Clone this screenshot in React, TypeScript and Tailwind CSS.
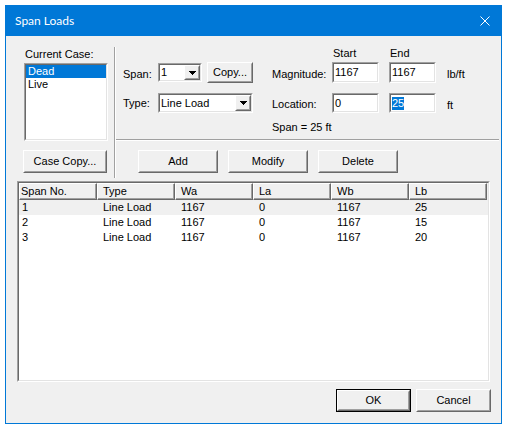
import React from "react";

const F = "font-['Liberation_Sans',Arial,sans-serif]";

function Sunken({
  className = "",
  innerClassName = "",
  children,
}: {
  className?: string;
  innerClassName?: string;
  children?: React.ReactNode;
}) {
  return (
    <div
      className={`border border-t-[#a0a0a0] border-l-[#a0a0a0] border-r-white border-b-white ${className}`}
    >
      <div
        className={`h-full w-full border border-t-[#696969] border-l-[#696969] border-r-[#e3e3e3] border-b-[#e3e3e3] ${innerClassName}`}
      >
        {children}
      </div>
    </div>
  );
}

function Raised({
  className = "",
  innerClassName = "",
  children,
}: {
  className?: string;
  innerClassName?: string;
  children?: React.ReactNode;
}) {
  return (
    <div
      className={`border border-t-white border-l-white border-r-[#696969] border-b-[#696969] ${className}`}
    >
      <div
        className={`h-full w-full border border-t-[#f0f0f0] border-l-[#f0f0f0] border-r-[#a0a0a0] border-b-[#a0a0a0] bg-[#f0f0f0] ${innerClassName}`}
      >
        {children}
      </div>
    </div>
  );
}

function Btn({
  className = "",
  children,
  isDefault = false,
}: {
  className?: string;
  children?: React.ReactNode;
  isDefault?: boolean;
}) {
  if (isDefault) {
    return (
      <div className={`border border-black ${className}`}>
        <Raised className="h-full w-full" innerClassName="flex items-center justify-center">
          {children}
        </Raised>
      </div>
    );
  }
  return (
    <Raised className={className} innerClassName="flex items-center justify-center">
      {children}
    </Raised>
  );
}

function Arrow() {
  return (
    <svg width="7" height="4" viewBox="0 0 7 4" shapeRendering="crispEdges">
      <rect x="0" y="0" width="7" height="1" fill="black" />
      <rect x="1" y="1" width="5" height="1" fill="black" />
      <rect x="2" y="2" width="3" height="1" fill="black" />
      <rect x="3" y="3" width="1" height="1" fill="black" />
    </svg>
  );
}

function Combo({ className = "", value }: { className?: string; value: string }) {
  return (
    <Sunken className={className} innerClassName="bg-white flex">
      <div className="flex-1 flex items-center pl-[1px]">{value}</div>
      <Raised className="w-[16px] h-full" innerClassName="flex items-center justify-center">
        <Arrow />
      </Raised>
    </Sunken>
  );
}

function TextBox({
  className = "",
  children,
}: {
  className?: string;
  children?: React.ReactNode;
}) {
  return (
    <Sunken className={className} innerClassName="bg-white flex items-center pl-[1px]">
      {children}
    </Sunken>
  );
}

const cols = ["Span No.", "Type", "Wa", "La", "Wb", "Lb"];
const rows = [
  ["1", "Line Load", "1167", "0", "1167", "25"],
  ["2", "Line Load", "1167", "0", "1167", "15"],
  ["3", "Line Load", "1167", "0", "1167", "20"],
];

export default function App() {
  return (
    <div
      className={`w-[506px] h-[430px] bg-white pt-[5px] pl-[5px] ${F} text-[11px] leading-[13px] text-black`}
    >
      <div className="w-[497px] h-[419px] border border-[#0078d7] flex flex-col">
        {/* Title bar */}
        <div className="h-[30px] shrink-0 bg-[#0078d7] flex items-center justify-between pl-[9px] pr-[11px]">
          <span className="font-['Lato',sans-serif] text-[12px] leading-[16px] text-white">
            Span Loads
          </span>
          <svg width="10" height="10" viewBox="0 0 10 10">
            <path d="M0.5 0.5L9.5 9.5M9.5 0.5L0.5 9.5" stroke="white" strokeWidth="1" />
          </svg>
        </div>

        {/* Body */}
        <div className="flex-1 bg-[#f0f0f0] flex flex-col">
          {/* Top area */}
          <div className="flex items-start pt-[11px] pl-[17px]">
            {/* Left column */}
            <div className="w-[85px] flex flex-col">
              <div className="h-[13px] mt-[1px] pl-[2px]">Current Case:</div>
              <Sunken className="mt-[2px] ml-[1px] w-[84px] h-[78px]" innerClassName="bg-white">
                <div className="h-[13px] bg-[#0078d7] text-white pl-[2px]">Dead</div>
                <div className="h-[13px] pl-[2px]">Live</div>
              </Sunken>
              <Btn className="mt-[9px] w-[84px] h-[23px]">Case Copy...</Btn>
            </div>

            {/* Vertical separator */}
            <div className="ml-[6px] w-[2px] h-[131px] border-l border-l-[#a0a0a0] border-r border-r-white" />

            {/* Right section */}
            <div className="flex-1 flex flex-col">
              <div className="flex h-[13px] pl-[217px]">
                <span className="w-[57px]">Start</span>
                <span>End</span>
              </div>

              <div className="flex items-start h-[21px] mt-[2px] pl-[7px]">
                <span className="w-[35px] mt-[6px]">Span:</span>
                <Combo className="w-[44px] h-[19px] mt-[1px]" value="1" />
                <Btn className="ml-[5px] w-[46px] h-[21px]">Copy...</Btn>
                <span className="ml-[19px] w-[60px] mt-[6px]">Magnitude:</span>
                <TextBox className="w-[47px] h-[21px]">1167</TextBox>
                <TextBox className="ml-[10px] w-[47px] h-[21px]">1167</TextBox>
                <span className="ml-[11px] mt-[6px]">lb/ft</span>
              </div>

              <div className="flex items-start h-[20px] mt-[10px] pl-[7px]">
                <span className="w-[35px] mt-[4px]">Type:</span>
                <Combo className="w-[95px] h-[20px]" value="Line Load" />
                <span className="ml-[19px] w-[60px] mt-[5px]">Location:</span>
                <TextBox className="w-[47px] h-[20px]">0</TextBox>
                <TextBox className="ml-[10px] w-[47px] h-[20px]">
                  <span className="bg-[#0078d7] text-white">25</span>
                </TextBox>
                <span className="ml-[11px] mt-[6px]">ft</span>
              </div>

              <div className="h-[13px] mt-[8px] pl-[156px]">Span = 25 ft</div>

              <div className="mt-[5px] mr-[2px] h-[2px] border-t border-t-[#a0a0a0] border-b border-b-white" />

              <div className="flex mt-[9px] pl-[22px] gap-[10px]">
                <Btn className="w-[80px] h-[23px]">Add</Btn>
                <Btn className="w-[80px] h-[23px]">Modify</Btn>
                <Btn className="w-[80px] h-[23px]">Delete</Btn>
              </div>
            </div>
          </div>

          {/* Table */}
          <Sunken
            className="mt-[3px] ml-[11px] w-[473px] h-[201px]"
            innerClassName="bg-white flex flex-col"
          >
            <div className="flex h-[17px] shrink-0 bg-[#f0f0f0]">
              {cols.map((c, i) => (
                <div
                  key={c}
                  className="w-[78px] h-full border-t border-t-white border-l border-l-white border-r border-r-[#696969] border-b border-b-[#696969]"
                >
                  <div
                    className={`h-full border-r border-r-[#a0a0a0] border-b border-b-[#a0a0a0] flex items-center ${
                      i === 0 ? "pl-[1px]" : "pl-[5px]"
                    }`}
                  >
                    {c}
                  </div>
                </div>
              ))}
            </div>
            {rows.map((r, ri) => (
              <div
                key={ri}
                className={`flex h-[15px] items-center ${ri === 0 ? "bg-[#f0f0f0]" : ""}`}
              >
                {r.map((v, i) => (
                  <div key={i} className={`w-[78px] ${i === 0 ? "pl-[3px]" : "pl-[6px]"}`}>
                    {v}
                  </div>
                ))}
              </div>
            ))}
          </Sunken>

          {/* Bottom buttons */}
          <div className="flex justify-end gap-[5px] mt-[7px] pr-[10px]">
            <Btn isDefault className="w-[75px] h-[23px]">
              OK
            </Btn>
            <Btn className="w-[75px] h-[23px]">Cancel</Btn>
          </div>
        </div>
      </div>
    </div>
  );
}
